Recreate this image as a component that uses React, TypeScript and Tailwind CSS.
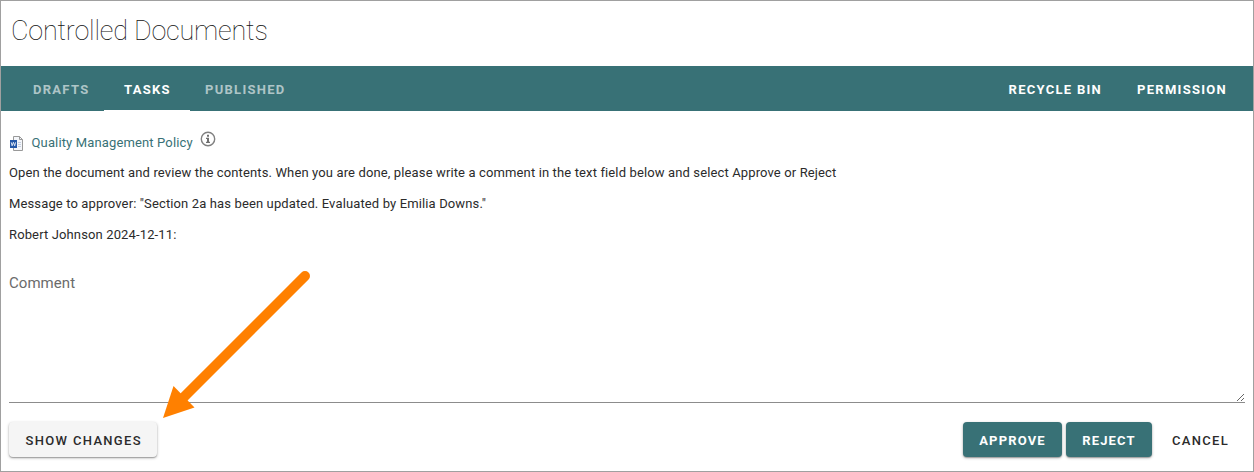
import React from 'react';

function WordIcon() {
  return (
    <svg width="14" height="16" viewBox="0 0 14 16" className="relative top-px ml-px shrink-0">
      <path d="M3.5.5h6l3 3v11h-9z" fill="#f4f6fa" stroke="#999" />
      <path d="M9.5.5v3h3" fill="none" stroke="#999" />
      <path d="M8 6.5h3M8 8.5h3M8 10.5h3" stroke="#c5cfe0" />
      <rect x="0" y="4" width="7" height="8" fill="#2458a8" />
      <path d="M1.2 6.3l.9 3.5 1.3-3.5 1.3 3.5.9-3.5" fill="none" stroke="#fff" strokeWidth=".8" />
    </svg>
  );
}

function InfoIcon() {
  return (
    <svg width="16" height="16" viewBox="0 0 16 16" className="block shrink-0">
      <circle cx="8" cy="8" r="6.7" fill="none" stroke="#808080" strokeWidth="1.4" />
      <path d="M7 3.7h2v2H7zM6 6.7h3v4h1v1.2H6v-1.2h1V8H6z" fill="#707070" />
    </svg>
  );
}

export default function App() {
  return (
    <div className="relative flex h-[472px] w-[1254px] flex-col overflow-hidden border border-[#a0a0a0] bg-white font-['Roboto',sans-serif] text-[13px] text-[#2b2b2b]">
      <header className="flex h-[65px] shrink-0 items-center pb-1 pl-[10px]">
        <h1 className="text-[27px] font-thin tracking-[-0.21px] text-[#111]">Controlled Documents</h1>
      </header>
      <nav className="flex h-[45px] shrink-0 justify-between bg-[#387176] pt-0.5 text-[13px] font-bold tracking-[1.28px] text-white">
        <div className="flex">
          <a className="flex w-[103px] items-center pl-8 text-white/60">DRAFTS</a>
          <a className="flex w-[86px] items-center pl-5 shadow-[inset_0_-1px_0_#fff]">TASKS</a>
          <a className="flex items-center pl-[15px] text-white/60">PUBLISHED</a>
        </div>
        <div className="flex items-center gap-[35px] pr-[26px]">
          <a>RECYCLE BIN</a>
          <a>PERMISSION</a>
        </div>
      </nav>
      <main className="flex flex-col px-2 tracking-[0.13px]">
        <div className="mt-6 flex h-4 items-center">
          <WordIcon />
          <a className="ml-[7.5px] tracking-[0.14px] text-[#387176]">Quality Management Policy</a>
          <span className="mb-[8px] ml-[7px]"><InfoIcon /></span>
        </div>
        <p className="mt-3 leading-5">Open the document and review the contents. When you are done, please write a comment in the text field below and select Approve or Reject</p>
        <p className="mt-[11px] leading-5">Message to approver: "Section 2a has been updated. Evaluated by Emilia Downs."</p>
        <p className="mt-[11px] leading-5">Robert Johnson 2024-12-11:</p>
        <textarea placeholder="Comment" className="mt-[27px] h-[131px] resize-y border-b border-[#8c8c8c] text-[15px] tracking-[0.05px] outline-none placeholder:text-[#6b6b6b]" />
      </main>
      <footer className="mt-[19px] flex items-center justify-between px-2 text-[13px] font-medium tracking-[1.32px]">
        <button className="h-[35px] w-[148px] rounded bg-[#f5f5f5] pl-[1.5px] pt-0.5 shadow-[0_1px_3px_rgba(0,0,0,0.3),0_1px_1px_rgba(0,0,0,0.2)]">SHOW CHANGES</button>
        <div className="flex gap-1">
          <button className="h-[35px] w-[99px] rounded bg-[#387176] pt-0.5 font-bold tracking-[1.16px] text-white shadow-[0_1px_3px_rgba(0,0,0,0.3),0_1px_1px_rgba(0,0,0,0.2)]">APPROVE</button>
          <button className="h-[35px] w-[86px] rounded bg-[#387176] pt-0.5 font-bold tracking-[1.16px] text-white shadow-[0_1px_3px_rgba(0,0,0,0.3),0_1px_1px_rgba(0,0,0,0.2)]">REJECT</button>
          <button className="h-[35px] w-[89px] pt-0.5">CANCEL</button>
        </div>
      </footer>
      <svg className="absolute left-[159px] top-[264px]" width="160" height="160" viewBox="160 265 160 160">
        <path d="M305 276L182 399" stroke="#ff8000" strokeWidth="10" strokeLinecap="round" />
        <path d="M163 418L173.500 386L194.500 407.500Z" fill="#ff8000" />
      </svg>
    </div>
  );
}
